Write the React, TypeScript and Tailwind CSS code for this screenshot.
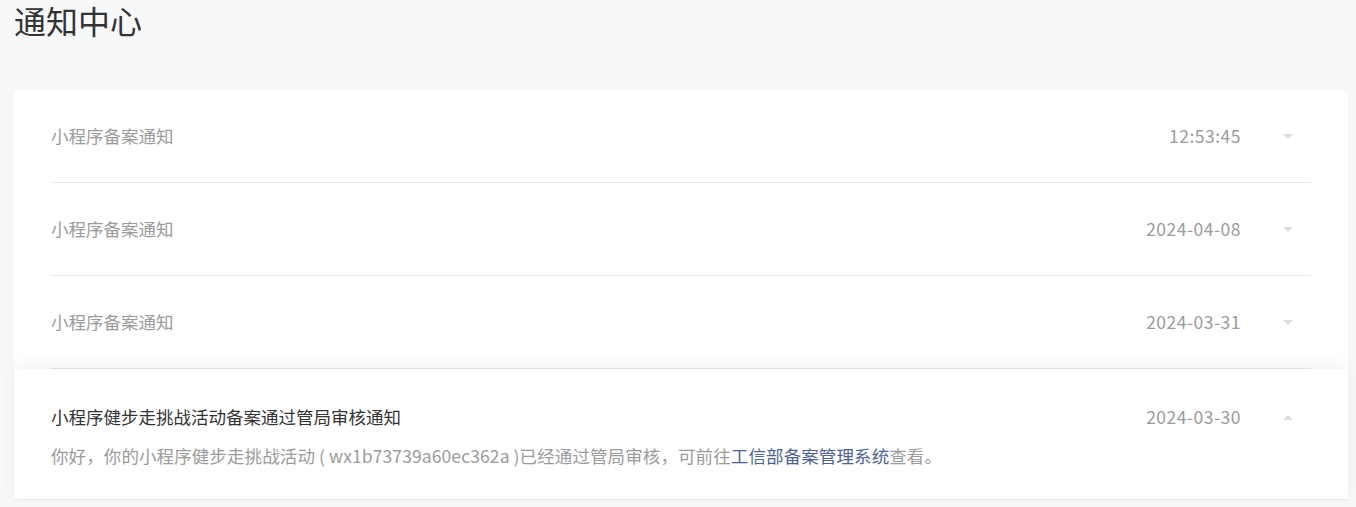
import React from "react";

const font = { fontFamily: '"Noto Sans CJK SC", "Noto Sans", sans-serif' };

function Arrow({ up }: { up?: boolean }) {
  return (
    <div className="w-[46px] flex justify-center">
      <svg width="10" height="5" viewBox="0 0 10 5">
        {up ? <path d="M0 5 L5 0 L10 5 Z" fill="#dcdcdc" /> : <path d="M0 0 L10 0 L5 5 Z" fill="#dcdcdc" />}
      </svg>
    </div>
  );
}

function Row({ title, date }: { title: string; date: string }) {
  return (
    <div className="h-[93px] flex items-center border-b border-[#e8e8e8]">
      <div className="flex-1 text-[17.5px] text-[#9b9b9b]">{title}</div>
      <div className="text-[17.5px] text-[#9b9b9b] mr-[24px] tracking-[0.5px]">{date}</div>
      <Arrow />
    </div>
  );
}

export default function App() {
  return (
    <div className="min-h-[507px] bg-[#f7f8fa] overflow-hidden" style={font}>
      <div className="pl-[14px] pr-[8px] pt-[2px]">
        <h1 className="text-[32px] leading-[36px] text-[#333]">通知中心</h1>
        <div className="mt-[52px] bg-white rounded-[6px]">
          <div className="px-[37px]">
            <Row title="小程序备案通知" date="12:53:45" />
            <Row title="小程序备案通知" date="2024-04-08" />
            <Row title="小程序备案通知" date="2024-03-31" />
          </div>
          <div className="px-[37px] pt-[36px] pb-[31px] bg-white shadow-[0_-4px_16px_rgba(0,0,0,0.05)] border-b border-[#ebebeb]">
            <div className="flex items-center h-[24px]">
              <div className="flex-1 text-[17.5px] text-[#333]">小程序健步走挑战活动备案通过管局审核通知</div>
              <div className="text-[17.5px] text-[#9b9b9b] mr-[24px] tracking-[0.5px]">2024-03-30</div>
              <Arrow up />
            </div>
            <div className="mt-[15px] h-[24px] leading-[24px] text-[17.5px] text-[#9b9b9b] tracking-[0.1px]">
              你好，你的小程序健步走挑战活动 ( wx1b73739a60ec362a )已经通过管局审核，可前往
              <span className="text-[#4c6294]">工信部备案管理系统</span>查看。
            </div>
          </div>
        </div>
      </div>
    </div>
  );
}
